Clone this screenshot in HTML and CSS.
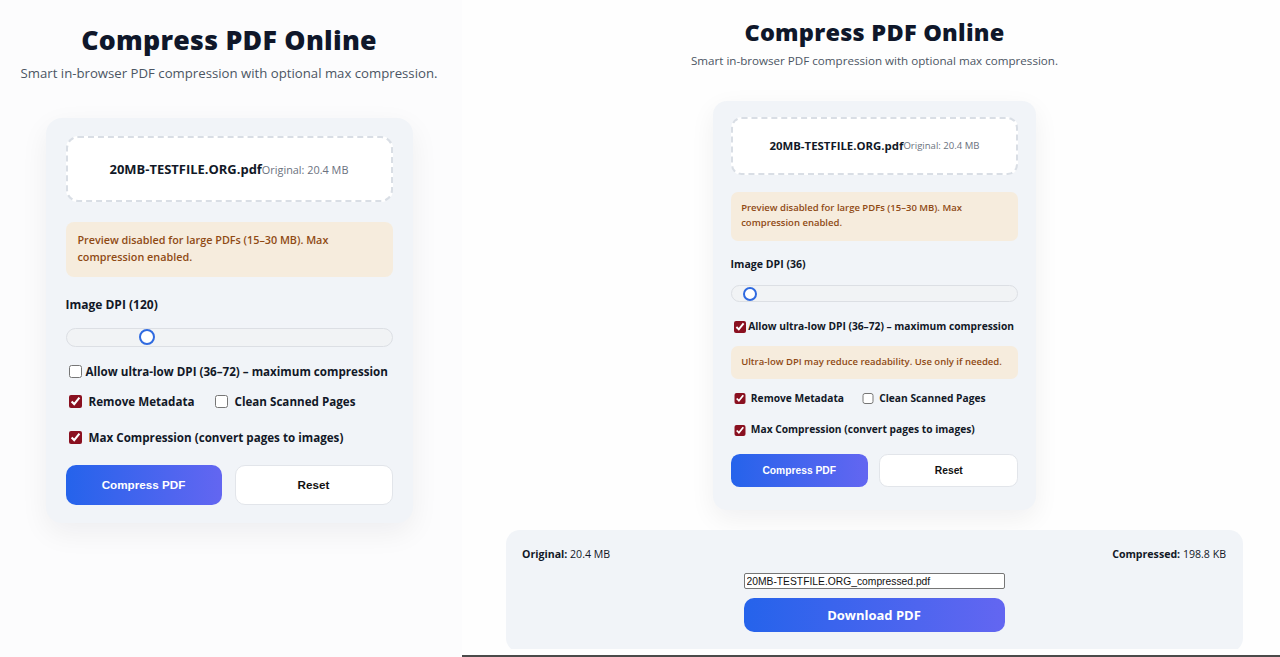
FILE: index.html
```html
<!DOCTYPE html>
<html lang="en">
<head>
<meta charset="utf-8">
<title>Compress PDF Online</title>
<link rel="stylesheet" href="styles.css">
</head>
<body>
<div class="shots">
  <section class="shot shot-left">
    <div class="app">
      <header class="hero">
        <h1>Compress PDF Online</h1>
        <p>Smart in-browser PDF compression with optional max compression.</p>
      </header>
      <div class="card">
        <div class="drop"><span class="fname">20MB-TESTFILE.ORG.pdf</span><span class="fsize">Original: 20.4 MB</span></div>
        <div class="notice notice-block">Preview disabled for large PDFs (15–30 MB). Max compression enabled.</div>
        <div class="field-label">Image DPI (120)</div>
        <input type="range" class="dpi" min="72" max="300" value="120">
        <label class="opt opt-allow"><input type="checkbox">Allow ultra-low DPI (36–72) – maximum compression</label>
        <div class="opt-row">
          <label class="opt"><input type="checkbox" checked>Remove Metadata</label>
          <label class="opt"><input type="checkbox">Clean Scanned Pages</label>
        </div>
        <label class="opt opt-max"><input type="checkbox" checked>Max Compression (convert pages to images)</label>
        <div class="actions">
          <button class="btn btn-primary">Compress PDF</button>
          <button class="btn btn-secondary">Reset</button>
        </div>
      </div>
    </div>
  </section>

  <section class="shot shot-right">
    <div class="viewport">
      <div class="app">
        <header class="hero">
          <h1>Compress PDF Online</h1>
          <p>Smart in-browser PDF compression with optional max compression.</p>
        </header>
        <div class="card">
          <div class="drop"><span class="fname">20MB-TESTFILE.ORG.pdf</span><span class="fsize">Original: 20.4 MB</span></div>
          <div class="notice notice-block">Preview disabled for large PDFs (15–30 MB). Max compression enabled.</div>
          <div class="field-label">Image DPI (36)</div>
          <input type="range" class="dpi" min="36" max="300" value="36">
          <label class="opt opt-allow"><input type="checkbox" checked>Allow ultra-low DPI (36–72) – maximum compression</label>
          <div class="notice notice-inline">Ultra-low DPI may reduce readability. Use only if needed.</div>
          <div class="opt-row">
            <label class="opt"><input type="checkbox" checked>Remove Metadata</label>
            <label class="opt"><input type="checkbox">Clean Scanned Pages</label>
          </div>
          <label class="opt opt-max"><input type="checkbox" checked>Max Compression (convert pages to images)</label>
          <div class="actions">
            <button class="btn btn-primary">Compress PDF</button>
            <button class="btn btn-secondary">Reset</button>
          </div>
        </div>
        <div class="result">
          <div class="result-sizes">
            <span><b>Original:</b> 20.4 MB</span>
            <span><b>Compressed:</b> 198.8 KB</span>
          </div>
          <input class="outname" type="text" value="20MB-TESTFILE.ORG_compressed.pdf">
          <button class="btn-download">Download PDF</button>
        </div>
      </div>
    </div>
  </section>
</div>
</body>
</html>
```

FILE: styles.css
```css
* { box-sizing: border-box; }

html, body {
  margin: 0;
  padding: 0;
  background: #ffffff;
}

body {
  font-family: "Open Sans", "Noto Sans", sans-serif;
  color: #111827;
}

.shots {
  display: flex;
  width: 1280px;
  height: 657px;
  overflow: hidden;
}

.shot {
  height: 657px;
  background: #fcfcfd;
}

.shot-left {
  width: 462px;
  flex: none;
  padding-right: 4px;
}

.shot-right {
  flex: 1;
  padding-left: 7px;
  padding-bottom: 6px;
  border-bottom: 2px solid #4a4a4a;
  background: #fefefe;
}

.viewport {
  height: 100%;
  overflow: hidden;
}

.app {
  display: flex;
  flex-direction: column;
  align-items: center;
  font-size: 16px;
}

.shot-left .app { padding-top: 24px; }
.shot-right .app { font-size: 14.08px; padding-top: 18px; }

/* hero */
.hero {
  text-align: center;
}

.hero h1 {
  margin: 0;
  font-size: 1.67em;
  line-height: 1.2;
  font-weight: 800;
  color: #0f172a;
  letter-spacing: 0.01em;
}

.hero p {
  margin: 0.587em 0 0;
  font-size: 0.825em;
  line-height: 1.4;
  color: #4b5563;
  white-space: nowrap;
}

/* card */
.card {
  margin-top: 2.234em;
  width: 22.9375em;
  padding: 1.125em 1.25em;
  background: #f1f4f8;
  border-radius: 1em;
  box-shadow: 0 0.6em 1.8em rgba(15, 23, 42, 0.06);
  display: flex;
  flex-direction: column;
}

.shot-right .card { padding-bottom: 23px; }

.drop {
  height: 4.125em;
  background: #ffffff;
  border: 2px dashed #d9dee5;
  border-radius: 0.75em;
  display: flex;
  align-items: center;
  justify-content: center;
  white-space: nowrap;
}

.fname {
  font-size: 0.81em;
  font-weight: 700;
  color: #111827;
}

.fsize {
  font-size: 0.68em;
  color: #6b7280;
}

.notice {
  background: #f6ecdd;
  color: #8f4a14;
  font-size: 0.675em;
  font-weight: 600;
  line-height: 1.574;
  padding: 0.97em 1.11em;
  border-radius: 0.74em;
}

.notice-block { margin-top: 1.85em; }

.notice-inline {
  margin-top: 1.158em;
  padding-top: 0.95em;
  padding-bottom: 0.95em;
}

.field-label {
  margin-top: 1.583em;
  font-size: 0.75em;
  font-weight: 700;
  line-height: 1.5;
}

/* range */
.dpi {
  -webkit-appearance: none;
  appearance: none;
  font-size: inherit;
  margin: 0.875em 0 0;
  width: 100%;
  height: 1.1875em;
  padding: 0 0.78em;
  background: #f1f3f5;
  border: 1px solid #dcdfe4;
  border-radius: 0.6em;
}

.dpi::-webkit-slider-runnable-track {
  height: 1em;
  background: transparent;
}

.dpi::-webkit-slider-thumb {
  -webkit-appearance: none;
  appearance: none;
  width: 1em;
  height: 1em;
  border-radius: 50%;
  background: #ffffff;
  border: 2px solid #2f6ae0;
}

/* options */
.opt {
  display: flex;
  align-items: center;
  font-size: 0.727em;
  font-weight: 700;
  line-height: 1.548;
  color: #111827;
  white-space: nowrap;
}

.opt input {
  font-size: inherit;
  margin: 0 0.52em 0 0.34em;
  width: 1.12em;
  height: 1.12em;
  accent-color: #8a1020;
}

.opt-allow { margin-top: 1.375em; }
.shot-right .opt-allow { margin-top: 1.65em; }
.opt-allow input { margin-right: 0.26em; }

.opt-row {
  display: flex;
  gap: 1.06em;
  margin-top: 0.75em;
}

.notice-inline + .opt-row { margin-top: 0.85em; }

.opt-max { margin-top: 1.548em; }

/* buttons */
.actions {
  display: flex;
  gap: 0.8125em;
  margin-top: 1.125em;
}

.btn {
  flex: 1;
  border-radius: 0.855em;
  font-family: "Liberation Sans", Arial, sans-serif;
  font-size: 0.73em;
  font-weight: 700;
  height: 3.42em;
}

.shot-right .btn { height: 3.21em; }

.btn-primary {
  border: none;
  color: #ffffff;
  background: linear-gradient(90deg, #2563eb, #6366f1);
}

.btn-secondary {
  border: 1px solid #e2e5ea;
  background: #ffffff;
  color: #111111;
}

/* result */
.result {
  margin-top: 20px;
  width: 737px;
  padding: 16px 17px 20px 16px;
  background: #f1f4f8;
  border-radius: 14px;
  display: flex;
  flex-direction: column;
  align-items: center;
  font-size: 10.6px;
  color: #111827;
}

.result-sizes {
  align-self: stretch;
  display: flex;
  justify-content: space-between;
  line-height: 16px;
}

.result-sizes b { font-weight: 700; }

.outname {
  margin-top: 11px;
  width: 261px;
  height: 16px;
  padding: 0 2px;
  border: 1px solid #767676;
  border-radius: 2px;
  font-family: "Liberation Sans", Arial, sans-serif;
  font-size: 10.3px;
  color: #111;
  background: #fff;
}

.btn-download {
  margin-top: 9px;
  width: 261px;
  height: 34px;
  border: none;
  border-radius: 10px;
  background: linear-gradient(90deg, #2563eb, #6366f1);
  color: #ffffff;
  font-family: "Open Sans", "Noto Sans", sans-serif;
  font-size: 13px;
  font-weight: 700;
}
```
